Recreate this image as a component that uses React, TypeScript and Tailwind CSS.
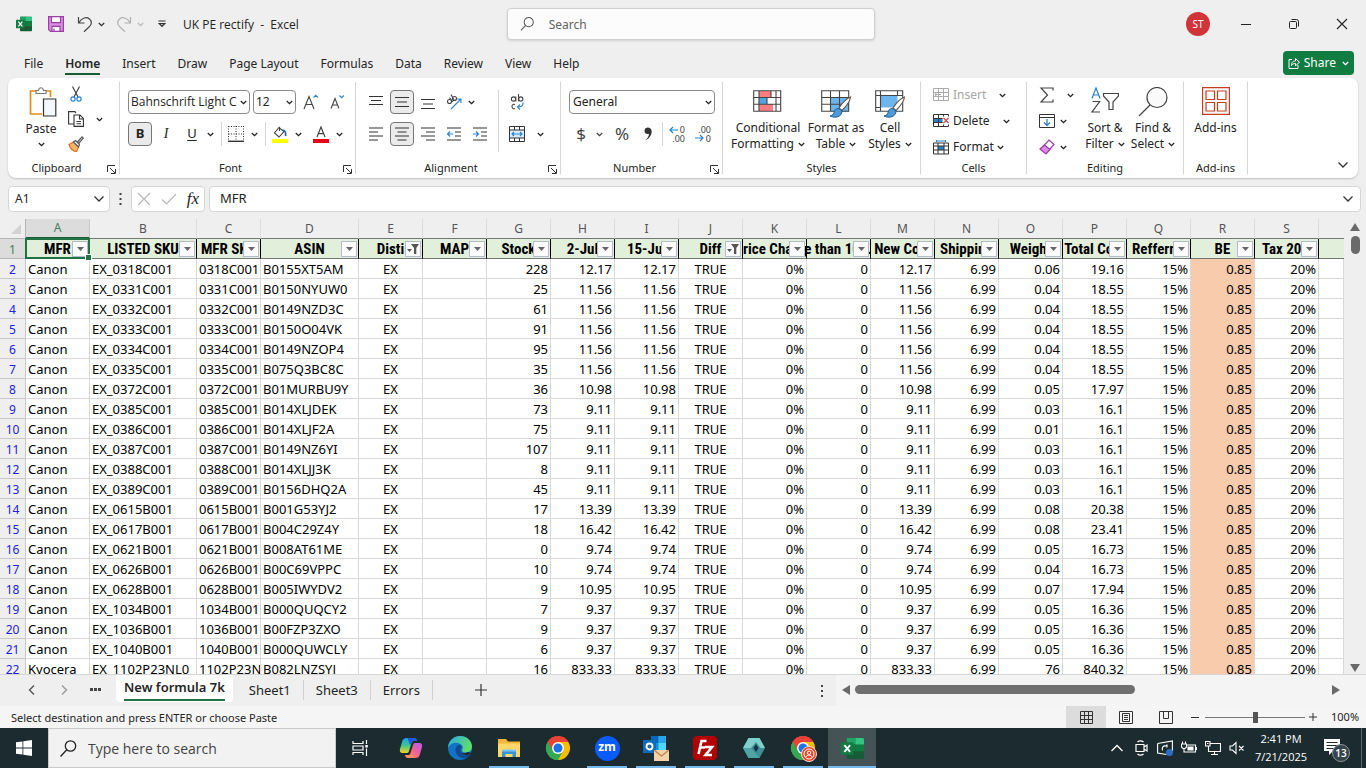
import type { ReactNode } from "react";

type Row = [string, string, string, string, string, string, string, string];

// brand, listed sku, asin, stock, price, weight, total, mfr sku
const rows: Row[] = [
  ["Canon", "EX_0318C001", "B0155XT5AM", "228", "12.17", "0.06", "19.16", "0318C001"],
  ["Canon", "EX_0331C001", "B0150NYUW0", "25", "11.56", "0.04", "18.55", "0331C001"],
  ["Canon", "EX_0332C001", "B0149NZD3C", "61", "11.56", "0.04", "18.55", "0332C001"],
  ["Canon", "EX_0333C001", "B0150O04VK", "91", "11.56", "0.04", "18.55", "0333C001"],
  ["Canon", "EX_0334C001", "B0149NZOP4", "95", "11.56", "0.04", "18.55", "0334C001"],
  ["Canon", "EX_0335C001", "B075Q3BC8C", "35", "11.56", "0.04", "18.55", "0335C001"],
  ["Canon", "EX_0372C001", "B01MURBU9Y", "36", "10.98", "0.05", "17.97", "0372C001"],
  ["Canon", "EX_0385C001", "B014XLJDEK", "73", "9.11", "0.03", "16.1", "0385C001"],
  ["Canon", "EX_0386C001", "B014XLJF2A", "75", "9.11", "0.01", "16.1", "0386C001"],
  ["Canon", "EX_0387C001", "B0149NZ6YI", "107", "9.11", "0.03", "16.1", "0387C001"],
  ["Canon", "EX_0388C001", "B014XLJJ3K", "8", "9.11", "0.03", "16.1", "0388C001"],
  ["Canon", "EX_0389C001", "B0156DHQ2A", "45", "9.11", "0.03", "16.1", "0389C001"],
  ["Canon", "EX_0615B001", "B001G53YJ2", "17", "13.39", "0.08", "20.38", "0615B001"],
  ["Canon", "EX_0617B001", "B004C29Z4Y", "18", "16.42", "0.08", "23.41", "0617B001"],
  ["Canon", "EX_0621B001", "B008AT61ME", "0", "9.74", "0.05", "16.73", "0621B001"],
  ["Canon", "EX_0626B001", "B00C69VPPC", "10", "9.74", "0.04", "16.73", "0626B001"],
  ["Canon", "EX_0628B001", "B005IWYDV2", "9", "10.95", "0.07", "17.94", "0628B001"],
  ["Canon", "EX_1034B001", "B000QUQCY2", "7", "9.37", "0.05", "16.36", "1034B001"],
  ["Canon", "EX_1036B001", "B00FZP3ZXO", "9", "9.37", "0.05", "16.36", "1036B001"],
  ["Canon", "EX_1040B001", "B000QUWCLY", "6", "9.37", "0.05", "16.36", "1040B001"],
  ["Kyocera", "EX_1102P23NL0", "B082LNZSYJ", "16", "833.33", "76", "840.32", "1102P23NL0"],
];

const headers = [
  "MFR", "LISTED SKU", "MFR SKU", "ASIN", "Disti", "MAP", "Stock", "2-Jul", "15-Jul", "Diff",
  "Price Change", "More than 100.00%", "New Cost", "Shipping", "Weight", "Total Cost", "Refferral", "BE", "Tax 20%",
];
const filtered = ["Disti", "Diff"];
const letters = "ABCDEFGHIJKLMNOPQRS".split("");

function Chev({ className = "" }: { className?: string }) {
  return (
    <svg className={`h-[5px] w-[7px] shrink-0 ${className}`} viewBox="0 0 7 5" fill="none" stroke="currentColor" strokeWidth="1.3" aria-hidden="true">
      <path d="M.8 1 3.5 3.7 6.2 1" />
    </svg>
  );
}

function BigChev() {
  return (
    <svg className="h-2 w-3 shrink-0" viewBox="0 0 12 8" fill="none" stroke="#333" strokeWidth="1.3" aria-hidden="true">
      <path d="M1.5 1.5 6 6l4.5-4.5" />
    </svg>
  );
}

function Tool({ label, children, className = "w-6", on = false }: { label: string; children: ReactNode; className?: string; on?: boolean }) {
  return (
    <button
      type="button"
      aria-label={label}
      className={`flex h-6 shrink-0 items-center justify-center rounded ${on ? "border border-[#777] bg-[#ebebeb]" : ""} ${className}`}
    >
      {children}
    </button>
  );
}

function Group({ name, className, launcher = false, children }: { name: string; className: string; launcher?: boolean; children: ReactNode }) {
  return (
    <section aria-label={name} className={`flex shrink-0 py-1 ${className}`}>
      <div className="flex min-w-0 flex-1 flex-col">
        <div className="h-20">{children}</div>
        <div className={`relative flex h-3 items-center justify-center text-[11px] leading-3 ${launcher ? "pr-3.5" : ""}`}>
          {name}
          {launcher && (
            <button type="button" aria-label={`${name} settings`} className="absolute right-[3px] top-[3px]">
              <svg className="h-[9px] w-[9px]" viewBox="0 0 9 9" fill="none" stroke="#333" strokeWidth="1">
                <path d="M.5 7V.5H8M3 3l5 5M8.500 4v4.500H4" />
              </svg>
            </button>
          )}
        </div>
      </div>
      <div className="w-px bg-[#d6d6d6]" />
    </section>
  );
}

function Lines({ d }: { d: string }) {
  return (
    <svg className="h-4 w-4" viewBox="0 0 16 16" fill="none" stroke="#333" strokeWidth="1.1" aria-hidden="true">
      <path d={d} />
    </svg>
  );
}

function ExcelLogo({ className }: { className: string }) {
  return (
    <svg className={className} viewBox="0 0 24 24" aria-hidden="true">
      <rect x="6" y="1" width="18" height="22" rx="1.500" fill="#185c37" />
      <path d="M6 1h9v7H6z" fill="#21a366" />
      <path d="M15 1h7.500A1.500 1.500 0 0 1 24 2.500V8h-9z" fill="#33c481" />
      <path d="M15 8h9v7h-9z" fill="#107c41" />
      <path d="M6 8h9v7H6z" fill="#107c41" />
      <rect x="0" y="5.500" width="13" height="13" rx="1" fill="#107c41" />
      <path d="m3.500 8.500 6 7M9.500 8.500l-6 7" stroke="#fff" strokeWidth="1.900" />
    </svg>
  );
}

function ChromeLogo({ badge = false }: { badge?: boolean }) {
  return (
    <svg className="h-6 w-6 overflow-visible" viewBox="0 0 24 24" aria-hidden="true">
      <path d="M12 12 1.600 6A12 12 0 0 1 22.400 6z" fill="#ea4335" />
      <path d="M12 12 22.400 6A12 12 0 0 1 12 24z" fill="#fbbc04" />
      <path d="M12 12v12A12 12 0 0 1 1.600 6z" fill="#34a853" />
      <path d="M12 6h10.400L17.200 15z" fill="#fbbc04" />
      <path d="M12 6h10.400A12 12 0 0 0 1.600 6l5.200 9z" fill="#ea4335" />
      <path d="m6.800 15-5.200-9A12 12 0 0 0 12 24l5.200-9z" fill="#34a853" />
      <circle cx="12" cy="12" r="6" fill="#fff" />
      <circle cx="12" cy="12" r="4.500" fill="#1a73e8" />
      {badge && (
        <g>
          <circle cx="18" cy="18" r="7.500" fill="#e8472b" stroke="#f6d9cf" strokeWidth="1" />
          <circle cx="18" cy="18" r="5" fill="none" stroke="#fff" strokeWidth="1" />
          <circle cx="18" cy="16.800" r="1.700" fill="none" stroke="#fff" strokeWidth="1" />
          <path d="M15 21c1-2.500 5-2.500 6 0" fill="none" stroke="#fff" strokeWidth="1" />
        </g>
      )}
    </svg>
  );
}

function TitleBar() {
  return (
    <header className="flex h-12 shrink-0 items-center pl-4">
      <div className="flex flex-1 items-center">
        <ExcelLogo className="h-4 w-4" />
        <button type="button" aria-label="Save" className="ml-4">
          <svg className="h-4 w-4" viewBox="0 0 16 16" fill="none" stroke="#9b3fa5" strokeWidth="1.200">
            <path d="M.6.600h14.800v14.800H2.500L.6 13.500z" fill="#d98ee0" />
            <path d="M3.500.600h9v6h-9z" fill="#fff" />
            <path d="M4 15.400v-5h8v5z" fill="#fff" />
            <path d="M6 12.500v3" />
          </svg>
        </button>
        <button type="button" aria-label="Undo" className="ml-[13px] flex items-center gap-[5px] text-[#333]">
          <svg className="h-[17px] w-4" viewBox="0 0 16 17" fill="none" stroke="#444" strokeWidth="1.200">
            <path d="M1.500 1v6h6M1.800 6.800C5 1.500 9.500.500 12.500 3c3 2.700 2 6-.5 8L7 15.800" />
          </svg>
          <Chev />
        </button>
        <button type="button" aria-label="Redo" className="ml-[11px] flex items-center gap-[5px] text-[#bbb]">
          <svg className="h-[17px] w-4" viewBox="0 0 16 17" fill="none" stroke="#b0b0b0" strokeWidth="1.200">
            <path d="M14.500 1v6h-6M14.200 6.800C11 1.500 6.500.500 3.500 3c-3 2.700-2 6 .5 8L9 15.800" />
          </svg>
          <Chev />
        </button>
        <button type="button" aria-label="Customize toolbar" className="ml-[14px]">
          <svg className="h-2 w-2" viewBox="0 0 8 8" fill="none" stroke="#333" strokeWidth="1.200">
            <path d="M.5 1h7M1.200 3.700 4 6.500l2.800-2.800z" />
          </svg>
        </button>
        <h1 className="ml-[17px] whitespace-pre pt-0.5 font-['Open_Sans','Noto_Sans',sans-serif] text-xs">UK PE rectify  -  Excel</h1>
      </div>
      <label className="flex h-8 w-[368px] shrink-0 items-center rounded border border-[#cfcfcf] bg-[#fcfcfc] pl-3 shadow-sm">
        <svg className="h-4 w-4" viewBox="0 0 16 16" fill="none" stroke="#555" strokeWidth="1.100" aria-hidden="true">
          <circle cx="9.500" cy="6" r="5" />
          <path d="m6 9.700-5 5.300" />
        </svg>
        <input aria-label="Search" placeholder="Search" className="ml-3.5 w-full bg-transparent pt-0.5 text-[12px] outline-none placeholder:text-[#616161]" />
      </label>
      <div className="flex flex-1 items-center justify-end">
        <button type="button" aria-label="Account" className="mr-3 h-6 w-6 rounded-full bg-[#d13438] text-[10px] text-white">ST</button>
        <button type="button" aria-label="Minimize" className="flex h-8 w-12 items-center justify-center">
          <span className="h-px w-2.5 bg-[#222]" />
        </button>
        <button type="button" aria-label="Restore" className="flex h-8 w-12 items-center justify-center">
          <svg className="h-2.5 w-2.5" viewBox="0 0 10 10" fill="none" stroke="#222" strokeWidth="1">
            <rect x=".5" y="2.500" width="7" height="7" rx="1" />
            <path d="M2.500.500h5a2 2 0 0 1 2 2v5" />
          </svg>
        </button>
        <button type="button" aria-label="Close" className="flex h-8 w-12 items-center justify-center">
          <svg className="h-3 w-3" viewBox="0 0 12 12" stroke="#222" strokeWidth="1.100">
            <path d="m1 1 10 10M11 1 1 11" />
          </svg>
        </button>
      </div>
    </header>
  );
}

const menu = ["File", "Home", "Insert", "Draw", "Page Layout", "Formulas", "Data", "Review", "View", "Help"];

function MenuBar() {
  return (
    <nav className="flex h-[30px] shrink-0 items-start justify-between pl-6 pr-3">
      <div className="flex gap-[22px] text-[12px] leading-[31px]">
        {menu.map((m) => (
          <a key={m} href="#" className={m === "Home" ? "relative font-semibold" : ""}>
            {m}
            {m === "Home" && <span className="absolute bottom-[4px] left-0 h-0.5 w-full bg-[#185c37]" />}
          </a>
        ))}
      </div>
      <button type="button" className="mt-[3px] flex h-6 items-center gap-1 rounded bg-[#107c41] px-[5px] text-[12px] text-white">
        <svg className="h-3 w-3" viewBox="0 0 12 12" fill="none" stroke="#fff" strokeWidth="1" aria-hidden="true">
          <path d="M4 2.500H1v9h9V8M3.500 8.500C3.500 5 5 4 7.500 4V1.500l4 3.700-4 3.600V6.500C5.500 6.500 4.500 7 3.500 8.500z" />
        </svg>
        Share
        <Chev className="ml-0.5" />
      </button>
    </nav>
  );
}

function TableIcon({ kind }: { kind: "cond" | "table" | "cell" }) {
  return (
    <svg className="h-7 w-[31px]" viewBox="0 0 31 28" fill="none" aria-hidden="true">
      <path d="M.7.700h27v20.600H.7z" fill="#fff" />
      {kind === "cond" && (
        <g>
          <path d="M6 1h12v6H6zM6 14h14v7H6z" fill="#ff7c80" />
          <path d="M6 7.500h8V14H6z" fill="#4ea6e6" />
          <path d="M.7.700h27v20.600H.7zM.7 7.500h27M.7 14.300h27M6 .700v20.600M23 .700v20.600M18 .700v6.800M14 7.500v6.800" stroke="#444" strokeWidth="1.100" />
        </g>
      )}
      {kind === "table" && (
        <g>
          <path d="M9.500 7.500H28v14H9.500z" fill="#6cb5ee" />
          <path d="M.7.700h27v20.600H.7zM.7 7.500h27M.7 14.300h27M9.500 .700v20.600M18.500 .700v20.600" stroke="#444" strokeWidth="1.100" />
        </g>
      )}
      {kind === "cell" && (
        <g>
          <path d="M5.500 5.500h17v12h-17z" fill="#6cb5ee" />
          <path d="M.7.700h27v20.600H.7zM5.500.700v20.600M.7 5.500h27M.7 17.500H6M22.500.700v5" stroke="#444" strokeWidth="1.100" />
        </g>
      )}
      {kind !== "cond" && (
        <g>
          <path d="M29.500 7c-4 1.500-9 7-11.500 11l3 2.500c3.500-3.500 8-9 8.500-13.500z" fill="#fff" stroke="#6b5344" strokeWidth="1.100" />
          <path d="M17.500 18.500c-3 0-4 1.500-4.500 4-.5 2-2 3-4 3.500 5 2.500 12 1 12-5z" fill="#4e9ad6" stroke="#1d5f97" strokeWidth="1" />
        </g>
      )}
    </svg>
  );
}

function BigButton({ icon, lines, drop = true, className, iconGap = "pt-2" }: { icon: ReactNode; lines: string[]; drop?: boolean; className: string; iconGap?: string }) {
  return (
    <button type="button" className={`flex flex-col items-center text-xs leading-4 ${className}`}>
      <span className={`flex h-[38px] items-start ${iconGap}`}>{icon}</span>
      {lines.map((l, i) => (
        <span key={l} className="flex items-center gap-1 whitespace-nowrap">
          {l}
          {drop && i === lines.length - 1 && <Chev />}
        </span>
      ))}
    </button>
  );
}

function CellAction({ label, icon, muted = false, gap }: { label: string; icon: ReactNode; muted?: boolean; gap: string }) {
  return (
    <button type="button" className={`flex h-[26px] items-center text-[12px] ${gap}`}>
      <svg className="mr-[3px] h-4 w-4" viewBox="0 0 16 16" fill="none" stroke={muted ? "#aaa" : "#333"} strokeWidth="1" aria-hidden="true">
        {icon}
      </svg>
      <span className={muted ? "text-[#a6a6a6]" : ""}>{label}</span>
      <Chev />
    </button>
  );
}

function Ribbon() {
  return (
    <div className="mx-2 flex h-[100px] shrink-0 rounded-lg bg-white shadow-[0_1px_2px_rgba(0,0,0,0.2)]">
      <Group name="Clipboard" className="w-[112px]" launcher>
        <div className="flex pl-3">
          <button type="button" className="flex w-[42px] flex-col items-center pt-[5px] text-xs leading-4">
            <svg className="ml-1 h-[30px] w-7" viewBox="0 0 28 30" fill="none" aria-hidden="true">
              <path d="M9 4H1.500v23H13M17 4h4.500v6" stroke="#e88a1a" strokeWidth="1.700" />
              <path d="M7 6.500V3.500h2.500C10 1.300 11 .700 12 .700s2 .600 2.500 2.800H17v3z" fill="#fff" stroke="#777" strokeWidth="1.100" />
              <path d="M14.500 12h12.300v17H14.500z" fill="#f4f8fc" stroke="#333" strokeWidth="1.200" />
            </svg>
            <span className="mt-1">Paste</span>
            <Chev className="mt-[5px]" />
          </button>
          <div className="ml-1 grid">
            <Tool label="Cut" className="w-5">
              <svg className="h-4 w-4" viewBox="0 0 16 16" fill="none" stroke="#444" strokeWidth="1.200">
                <path d="M4.500.500 10 11M11.500.500 6 11" />
                <circle cx="5" cy="13" r="2.100" stroke="#2b83cf" />
                <circle cx="11" cy="13" r="2.100" stroke="#2b83cf" />
              </svg>
            </Tool>
            <div className="flex h-[26px] items-center">
              <Tool label="Copy" className="w-5">
                <svg className="h-4 w-4" viewBox="0 0 16 16" fill="none" stroke="#333" strokeWidth="1.100">
                  <path d="M6 13H.600V.600H7L8 2M6 4h6l3.400 3.400v8H6zM11.500 4v4h4M8.500 10.500h4.500M8.500 12.800h4.500" />
                </svg>
              </Tool>
              <Chev className="ml-2.5" />
            </div>
            <Tool label="Format Painter" className="w-5">
              <svg className="h-4 w-4" viewBox="0 0 16 16" fill="none" strokeWidth="1.200">
                <path d="M1 8.500 5.500 6l5 5-2 4.500c-3 0-6-2.500-7.500-7z" fill="#f7b36b" stroke="#e0701a" />
                <path d="m5.500 6 2-1.500 4 4-1 2.500zM9.500 6 14 .900l1.300 1.300L11 7" fill="#fff" stroke="#555" />
              </svg>
            </Tool>
          </div>
        </div>
      </Group>

      <Group name="Font" className="w-[236px]" launcher>
        <div className="pl-2 pt-2">
          <div className="flex h-6 items-center">
            <div className="relative">
              <select aria-label="Font name" className="block h-6 w-[122px] appearance-none overflow-hidden rounded border border-[#8a8a8a] bg-white pl-0.5 pr-3 font-['Open_Sans','Noto_Sans',sans-serif] text-[12px] outline-none">
                <option>Bahnschrift Light Condensed</option>
              </select>
              <Chev className="pointer-events-none absolute right-[3px] top-[10px]" />
            </div>
            <div className="relative ml-[3px]">
              <select aria-label="Font size" className="block h-6 w-[43px] appearance-none rounded border border-[#8a8a8a] bg-white pl-0.5 text-[12px] outline-none">
                <option>12</option>
              </select>
              <Chev className="pointer-events-none absolute right-[3px] top-[10px]" />
            </div>
            <Tool label="Grow font" className="ml-0.5 w-[26px]">
              <svg className="h-4 w-4" viewBox="0 0 16 16" fill="none" strokeWidth="1.100">
                <path d="m1 15 5-12.500L11 15M3 10.500h6" stroke="#444" />
                <path d="m10.500 3.500 2.200-2.200 2.200 2.200" stroke="#2b83cf" />
              </svg>
            </Tool>
            <Tool label="Shrink font" className="w-[26px]">
              <svg className="h-4 w-4" viewBox="0 0 16 16" fill="none" strokeWidth="1.100">
                <path d="m2 14.500 4-10 4 10M3.500 11h5" stroke="#444" />
                <path d="m10.500 1.500 2.200 2.200 2.200-2.200" stroke="#2b83cf" />
              </svg>
            </Tool>
          </div>
          <div className="mt-2 flex h-6 items-center">
            <Tool label="Bold" on><span className="text-[13px] font-bold">B</span></Tool>
            <Tool label="Italic" className="ml-0.5 w-6"><span className="font-['Liberation_Serif',serif] text-sm italic">I</span></Tool>
            <Tool label="Underline" className="ml-0.5 w-6"><span className="text-[13px] underline underline-offset-2">U</span></Tool>
            <Chev className="ml-[3px]" />
            <span className="ml-[7px] h-6 w-px bg-[#d6d6d6]" />
            <Tool label="Borders" className="ml-0.5 w-6">
              <svg className="h-4 w-4" viewBox="0 0 16 16" fill="none" stroke="#333">
                <path d="M.5.500h15M.5 8h15M.5 0v15M8 0v15M15.500 0v15" strokeDasharray="1 1.500" />
                <path d="M0 15.300h16" strokeWidth="1.400" />
              </svg>
            </Tool>
            <Chev className="ml-[3px]" />
            <span className="ml-[7px] h-6 w-px bg-[#d6d6d6]" />
            <Tool label="Fill color" className="ml-0.5 w-6">
              <svg className="h-[17px] w-4" viewBox="0 0 16 17" fill="none">
                <path d="M7 1.500 2.500 7l4.500 4L12 5.500zM7.500 5V.700" stroke="#444" strokeWidth="1.100" />
                <path d="M10.500 4c3 .500 3.500 3 3 6" stroke="#2166a8" strokeWidth="1.700" />
                <path d="M0 13h16v4H0z" fill="#ffff00" />
              </svg>
            </Tool>
            <Chev className="ml-[3px]" />
            <Tool label="Font color" className="ml-[7px] w-6">
              <svg className="h-[17px] w-4" viewBox="0 0 16 17" fill="none">
                <path d="M4 11 8 1l4 10M5.500 7.700h5" stroke="#444" strokeWidth="1.200" />
                <path d="M0 13h16v4H0z" fill="#e60012" />
              </svg>
            </Tool>
            <Chev className="ml-[3px]" />
          </div>
        </div>
      </Group>

      <Group name="Alignment" className="w-[205px]" launcher>
        <div className="flex items-start pl-2 pt-2">
          <div className="grid gap-y-2">
            <div className="flex items-center gap-0.5">
              <Tool label="Top align"><Lines d="M1 2.500h14M3 6.500h10M1 10.500h14" /></Tool>
              <Tool label="Middle align" on><Lines d="M1 3.500h14M3 8h10M1 12.500h14" /></Tool>
              <Tool label="Bottom align"><Lines d="M1 5.500h14M3 10h10M1 14.500h14" /></Tool>
              <Tool label="Orientation">
                <svg className="h-4 w-4" viewBox="0 0 16 16" fill="none" strokeWidth="1.100">
                  <path d="M5 15 15 5M11 5h4v4" stroke="#2b83cf" />
                  <g stroke="#444">
                    <circle cx="3.500" cy="7.500" r="2" />
                    <path d="M3.500 3.700 7 8" />
                    <circle cx="8.500" cy="4.500" r="2" />
                    <path d="M5 .500 8 6" />
                  </g>
                </svg>
              </Tool>
              <Chev />
            </div>
            <div className="flex items-center gap-0.5">
              <Tool label="Align left"><Lines d="M1 2h14M1 6h9M1 10h14M1 14h9" /></Tool>
              <Tool label="Center" on><Lines d="M1 2h14M3.500 6h9M1 10h14M3.500 14h9" /></Tool>
              <Tool label="Align right"><Lines d="M1 2h14M6 6h9M1 10h14M6 14h9" /></Tool>
              <Tool label="Decrease indent">
                <svg className="h-4 w-4" viewBox="0 0 16 16" fill="none" strokeWidth="1.100">
                  <path d="M1 2h14M9 6h6M9 10h6M1 14h14" stroke="#333" />
                  <path d="M7 8H1.500M4 5.500 1.500 8 4 10.500" stroke="#2b83cf" />
                </svg>
              </Tool>
              <Tool label="Increase indent">
                <svg className="h-4 w-4" viewBox="0 0 16 16" fill="none" strokeWidth="1.100">
                  <path d="M1 2h14M9 6h6M9 10h6M1 14h14" stroke="#333" />
                  <path d="M1 8h5.500M4 5.500 6.500 8 4 10.500" stroke="#2b83cf" />
                </svg>
              </Tool>
            </div>
          </div>
          <span className="ml-1.5 h-[62px] w-px bg-[#d6d6d6]" />
          <div className="ml-1.5 grid gap-y-2">
            <Tool label="Wrap text">
              <svg className="h-4 w-4" viewBox="0 0 16 16" fill="none" strokeWidth="1.100">
                <g stroke="#444">
                  <circle cx="4.500" cy="5" r="2.100" />
                  <path d="M6.800 2.500v5M9.500 0v7.300" />
                  <circle cx="11.800" cy="5" r="2.100" />
                  <path d="M6 10.500c-4-1.500-4 5.500 0 4" />
                </g>
                <path d="M14 8.500v1c0 3-2 3.500-5.500 3.500M11 10.500 8.500 13l2.500 2.500" stroke="#2b83cf" />
              </svg>
            </Tool>
            <div className="flex items-center">
              <Tool label="Merge and center">
                <svg className="h-4 w-4" viewBox="0 0 16 16" fill="none">
                  <path d="M.5 4h15v8H.5z" fill="#d8ecfb" />
                  <path d="M.5.500h15v15H.5zM.5 4h15M.5 12h15M5.500.500V4M10.500.500V4M5.500 12v3.500M10.500 12v3.500" stroke="#333" />
                  <path d="M3 8h10M5 6 3 8l2 2M11 6l2 2-2 2" stroke="#2b83cf" strokeWidth="1.200" />
                </svg>
              </Tool>
              <Chev className="ml-2" />
            </div>
          </div>
        </div>
      </Group>

      <Group name="Number" className="w-[162px]" launcher>
        <div className="pl-2 pt-2">
          <div className="relative w-[146px]">
            <select aria-label="Number format" className="block h-6 w-full appearance-none rounded border border-[#8a8a8a] bg-white pl-[3px] text-[12px] outline-none">
              <option>General</option>
            </select>
            <Chev className="pointer-events-none absolute right-[3px] top-[10px]" />
          </div>
          <div className="mt-2 flex items-center text-[#444]">
            <Tool label="Currency"><span className="text-[17px]">$</span></Tool>
            <Chev className="ml-[3px]" />
            <Tool label="Percent" className="ml-[7px] w-6"><span className="text-[17px]">%</span></Tool>
            <Tool label="Comma" className="ml-0.5 w-6">
              <svg className="h-3.5 w-2" viewBox="0 0 8 14" fill="#333"><path d="M3.500.500A3.500 3.500 0 0 0 .5 4c0 2 1.500 3 3 3 .7 0 1 0 1.500-.300C5 9 3.500 11.500 1 13.500 5 12 7.700 8 7.700 4.500 7.700 2 6 .500 3.500.500z" /></svg>
            </Tool>
            <span className="ml-0.5 h-6 w-px bg-[#d6d6d6]" />
            <Tool label="Increase decimal" className="ml-0.5 w-6">
              <span className="relative flex w-4 flex-col items-end text-[9px] leading-[9px]">
                <svg className="absolute left-0 top-px h-2 w-2.5" viewBox="0 0 10 8" fill="none" stroke="#2b83cf" strokeWidth="1.200"><path d="M9 4H1M4 1 1 4l3 3" /></svg>
                <span>0</span><span>.00</span>
              </span>
            </Tool>
            <Tool label="Decrease decimal" className="ml-0.5 w-6">
              <span className="relative flex w-4 flex-col items-end text-[9px] leading-[9px]">
                <svg className="absolute bottom-px left-0 h-2 w-2.5" viewBox="0 0 10 8" fill="none" stroke="#2b83cf" strokeWidth="1.200"><path d="M0 4h8M5 1l3 3-3 3" /></svg>
                <span>.00</span><span>0</span>
              </span>
            </Tool>
          </div>
        </div>
      </Group>

      <Group name="Styles" className="w-[198px]">
        <div className="flex pl-[7px]">
          <BigButton className="w-[76px]" icon={<TableIcon kind="cond" />} lines={["Conditional", "Formatting"]} />
          <BigButton className="w-[60px]" icon={<TableIcon kind="table" />} lines={["Format as", "Table"]} />
          <BigButton className="w-12" icon={<TableIcon kind="cell" />} lines={["Cell", "Styles"]} />
        </div>
      </Group>

      <Group name="Cells" className="w-[106px]">
        <div className="flex flex-col items-start pl-3">
          <CellAction label="Insert" muted gap="gap-px [&>svg:last-child]:ml-3" icon={<path d="M.5 1.500h15v12H.5zM.5 5.500h15M.5 9.500h15M5.500 1.500v12M10.500 1.500v12M8 7.500H2M4 5 2 7.500 4 10" />} />
          <CellAction
            label="Delete"
            gap="gap-px [&>svg:last-child]:ml-3"
            icon={<><path d="M.5 5.500h9v4h-9z" fill="#2b83cf" stroke="none" /><path d="M.5 1.500h15v2M.5 1.500v12h15v-2M.5 5.500h9M.5 9.500h9M5.500 1.500v12M10.500 1.500v2M10.500 11.500v2" /><path d="m10.500 5 5 5M15.500 5l-5 5" stroke="#e0454b" strokeWidth="1.300" /></>}
          />
          <CellAction
            label="Format"
            gap="gap-px [&>svg:last-child]:ml-0.5"
            icon={<><path d="M5 7h6v4H5z" fill="#2b83cf" stroke="none" /><path d="M.5 4v11h15V4zM.5 7h15M.5 11h15M5 4v11M11 4v11" /><path d="M3.500 1v2M12.500 1v2M3.500 2h9" stroke="#2b83cf" /></>}
          />
        </div>
      </Group>

      <Group name="Editing" className="w-[157px]">
        <div className="flex pl-[7px]">
          <div className="grid">
            <div className="flex h-[26px] items-center">
              <Tool label="AutoSum" className="w-[26px]">
                <svg className="h-4 w-4" viewBox="0 0 16 16" fill="none" stroke="#444" strokeWidth="1.200"><path d="M14 3.500V1H2l6.500 7L2 15h12v-2.500" /></svg>
              </Tool>
              <Chev className="ml-[7px]" />
            </div>
            <div className="flex h-[26px] items-center">
              <Tool label="Fill" className="w-[26px]">
                <svg className="h-4 w-4" viewBox="0 0 16 16" fill="none" stroke="#333"><path d="M.5 1.500h15v13H.5zM.5 4.500h15" /><path d="M8 6v6.500M5 9.500l3 3 3-3" stroke="#2b83cf" strokeWidth="1.300" /></svg>
              </Tool>
              <Chev />
            </div>
            <div className="flex h-[26px] items-center">
              <Tool label="Clear" className="w-[26px]">
                <svg className="h-4 w-4" viewBox="0 0 16 16" fill="none" stroke="#9b3fa5" strokeWidth="1.200"><path d="m10 1 5 4.500-8 9-5.500-4.500z" fill="#fff" /><path d="M5.500 6 11 10.500l-4 4.500-6-5z" fill="#d98ee0" /></svg>
              </Tool>
              <Chev />
            </div>
          </div>
          <BigButton
            className="ml-[7px] w-12"
            lines={["Sort &", "Filter"]}
            icon={
              <svg className="h-7 w-7" viewBox="0 0 28 28" fill="none" strokeWidth="1.200" aria-hidden="true">
                <path d="M1 12.500 5 2l4 10.500M2.500 9h5" stroke="#2b83cf" />
                <path d="M1.500 15.500h7.200L1 26h8" stroke="#444" />
                <path d="M12.500 7.500h15v2.500l-5.500 6v7.500h-4V16l-5.500-6z" stroke="#444" />
              </svg>
            }
            iconGap="pt-1"
          />
          <BigButton
            className="w-12"
            lines={["Find &", "Select"]}
            iconGap="pt-[5px]"
            icon={
              <svg className="h-[30px] w-[30px]" viewBox="0 0 30 30" fill="none" stroke="#444" strokeWidth="1.200" aria-hidden="true">
                <circle cx="19" cy="10.500" r="10" fill="#fafafa" />
                <path d="M12 18 1 29" />
              </svg>
            }
          />
        </div>
      </Group>

      <Group name="Add-ins" className="w-16">
        <BigButton
          className="w-full"
          drop={false}
          lines={["Add-ins"]}
          iconGap="pt-[5px]"
          icon={
            <svg className="h-7 w-7" viewBox="0 0 28 28" fill="none" stroke="#c43e1c" strokeWidth="1.200" aria-hidden="true">
              <path d="M.6.600h26.800v26.800H.6zM4 4h8.500v8.500H4zM15.500 4H24v8.500h-8.500zM4 15.500h8.500V24H4zM15.500 15.500H24V24h-8.500z" />
            </svg>
          }
        />
      </Group>
      <div className="flex flex-1 items-end justify-end p-[9px]">
        <button type="button" aria-label="Collapse ribbon"><BigChev /></button>
      </div>
    </div>
  );
}

function FormulaBar() {
  return (
    <div className="flex h-[41px] shrink-0 items-center pl-2 pr-[5px] pt-px">
      <div className="flex h-[26px] w-[102px] items-center justify-between rounded border border-[#d6d6d6] bg-white px-1">
        <input aria-label="Name box" defaultValue="A1" className="w-16 bg-transparent pl-0.5 text-[12px] outline-none" />
        <BigChev />
      </div>
      <svg className="mx-2 h-3 w-[5px]" viewBox="0 0 5 12" fill="#444" aria-hidden="true">
        <path d="M1.500 0h2v2h-2zM1.500 5h2v2h-2zM1.500 10h2v2h-2z" />
      </svg>
      <div className="flex h-[26px] w-[74px] items-center justify-around rounded border border-[#d6d6d6] bg-white">
        <svg className="h-3.5 w-3.5" viewBox="0 0 14 14" stroke="#b8b8b8" strokeWidth="1.200" aria-hidden="true"><path d="m1 1 12 12M13 1 1 13" /></svg>
        <svg className="h-3.5 w-4" viewBox="0 0 16 14" fill="none" stroke="#b8b8b8" strokeWidth="1.200" aria-hidden="true"><path d="m1 7.500 4.500 4.500L15 2" /></svg>
        <button type="button" aria-label="Insert function" className="font-['Liberation_Serif',serif] text-[17px] italic leading-5 text-[#222]">fx</button>
      </div>
      <label className="ml-1 flex h-[26px] flex-1 items-center rounded border border-[#d6d6d6] bg-white pl-2.5 pr-1.5">
        <input aria-label="Formula" defaultValue="MFR" className="flex-1 bg-transparent text-[13px] outline-none" />
        <BigChev />
      </label>
    </div>
  );
}

const cell = "h-5 overflow-hidden whitespace-nowrap border-b border-r border-[#d9d9d9] bg-white p-0 px-[2px] pt-0.5 leading-[17px]";

function Sheet() {
  return (
    <div className="flex min-h-0 flex-1">
      <div className="min-w-0 flex-1 overflow-hidden">
        <table className="w-full table-fixed border-separate border-spacing-0 text-[13px] text-black">
          <colgroup>
            <col className="w-[26px]" />
            <col className="w-16" />
            <col className="w-[107px]" />
            <col className="w-16" />
            <col className="w-[98px]" />
            {letters.slice(4).map((l) => <col key={l} className="w-16" />)}
            <col />
          </colgroup>
          <thead>
            <tr className="text-xs text-[#555]">
              <th className="h-5 border-b border-r border-[#b5b5b5] p-0">
                <svg className="ml-auto mr-1 h-2.5 w-2.5" viewBox="0 0 10 10" fill="#d2d2d2" aria-hidden="true"><path d="M10 0v10H0z" /></svg>
              </th>
              {letters.map((l) => (
                <th key={l} className={l === "A" ? "h-5 border-b-2 border-r border-[#185c37] border-r-[#c8c8c8] bg-[#dcdcdc] p-0 font-normal leading-[18px] text-[#3f7f5f]" : "h-5 border-b border-r border-b-[#777] border-r-[#dcdcdc] p-0 font-normal leading-[19px]"}>{l}</th>
              ))}
              <th className="h-5 border-b border-[#777] p-0" />
            </tr>
            <tr>
              <th className="h-5 border-b border-r border-[#b5b5b5] bg-[#dcdcdc] p-0 pt-0.5 text-[12px] font-normal leading-[17px] text-[#3f7f5f]">1</th>
              {headers.map((h) => (
                <th key={h} className="relative h-5 border-b border-r border-b-[#777] border-r-black bg-[#e2efda] p-0 font-['Roboto_Condensed','Roboto',sans-serif] text-[15px] font-bold leading-[17px]">
                  <div className="flex h-[19px] justify-center overflow-hidden whitespace-nowrap pt-0.5"><span>{h}</span></div>
                  <button type="button" aria-label={`Filter ${h}`} className="absolute right-px top-[2px] flex h-4 w-4 items-center justify-center border border-[#b4bccb] bg-[#fbfbfd]">
                    {filtered.includes(h) ? (
                      <svg className="h-3 w-3" viewBox="0 0 12 12" fill="#555" aria-hidden="true"><path d="M4 1h8L9.300 5v6H7V5zM0 6h5L2.500 9z" /></svg>
                    ) : (
                      <svg className="h-1 w-[7px]" viewBox="0 0 7 4" fill="#666" aria-hidden="true"><path d="M0 0h7L3.500 4z" /></svg>
                    )}
                  </button>
                  {h === "MFR" && (
                    <span className="pointer-events-none absolute -inset-px z-10 border-2 border-[#217346]">
                      <span className="absolute -bottom-[3px] -right-[3px] h-[5px] w-[5px] bg-[#217346] outline outline-white" />
                    </span>
                  )}
                </th>
              ))}
              <th className="h-5 border-b border-[#777] bg-[#e2efda] p-0" />
            </tr>
          </thead>
          <tbody>
            {rows.map(([brand, sku, asin, stock, price, weight, total, mfr], i) => (
              <tr key={sku}>
                <th className="h-5 border-b border-r border-[#c8c8c8] p-0 pt-0.5 text-[12px] font-normal leading-[17px] text-[#2222dd]">{i + 2}</th>
                <td className={cell}>{brand}</td>
                <td className={cell}>{sku}</td>
                <td className={cell}>{mfr}</td>
                <td className={cell}>{asin}</td>
                <td className={`${cell} text-center`}>EX</td>
                <td className={cell} />
                <td className={`${cell} text-right`}>{stock}</td>
                <td className={`${cell} text-right`}>{price}</td>
                <td className={`${cell} text-right`}>{price}</td>
                <td className={`${cell} text-center`}>TRUE</td>
                <td className={`${cell} text-right`}>0%</td>
                <td className={`${cell} text-right`}>0</td>
                <td className={`${cell} text-right`}>{price}</td>
                <td className={`${cell} text-right`}>6.99</td>
                <td className={`${cell} text-right`}>{weight}</td>
                <td className={`${cell} text-right`}>{total}</td>
                <td className={`${cell} text-right`}>15%</td>
                <td className="h-5 border-r border-[#d9d9d9] bg-[#f8cbad] p-0 px-[2px] text-right leading-5">0.85</td>
                <td className={`${cell} text-right`}>20%</td>
                <td className={cell} />
              </tr>
            ))}
          </tbody>
        </table>
      </div>
      <div className="flex w-[22px] shrink-0 flex-col items-center pb-0.5 pt-1">
        <svg className="h-2 w-2.5" viewBox="0 0 10 8" fill="#6a6a6a" aria-hidden="true"><path d="M5 0 10 8H0z" /></svg>
        <span className="mt-[5px] h-[18px] w-[9px] rounded-full bg-[#6a6a6a]" />
        <span className="flex-1" />
        <svg className="h-2 w-2.5" viewBox="0 0 10 8" fill="#6a6a6a" aria-hidden="true"><path d="M5 8 10 0H0z" /></svg>
      </div>
    </div>
  );
}

function SheetTabs() {
  return (
    <div className="flex h-8 shrink-0 border-t border-[#d6d6d6] text-[13px]">
      <div className="flex w-[116px] shrink-0 items-center pb-0.5 pl-7">
        <svg className="h-2.5 w-[7px]" viewBox="0 0 7 10" fill="none" stroke="#555" strokeWidth="1.400" aria-hidden="true"><path d="M6 .500 1.500 5 6 9.500" /></svg>
        <svg className="ml-[26px] h-2.5 w-[7px]" viewBox="0 0 7 10" fill="none" stroke="#999" strokeWidth="1.400" aria-hidden="true"><path d="M1 .500 5.500 5 1 9.500" /></svg>
        <svg className="ml-[22px] h-[3px] w-[11px]" viewBox="0 0 11 3" fill="#444" aria-hidden="true"><path d="M0 0h3v3H0zM4 0h3v3H4zM8 0h3v3H8z" /></svg>
      </div>
      <a href="#" className="flex h-[27px] items-start rounded-b bg-white px-2 text-[13px] font-semibold">
        <span className="border-b-2 border-[#217346] leading-6">New formula 7k</span>
      </a>
      <div className="flex items-center pb-0.5 pl-1">
        {["Sheet1", "Sheet3", "Errors"].map((t) => (
          <a key={t} href="#" className="border-r border-[#cfcfcf] px-3 leading-5">{t}</a>
        ))}
        <button type="button" aria-label="New sheet" className="ml-[42px]">
          <svg className="h-3 w-3" viewBox="0 0 12 12" stroke="#333" strokeWidth="1.200"><path d="M6 0v12M0 6h12" /></svg>
        </button>
      </div>
      <div className="ml-auto flex w-[550px] items-center">
        <svg className="h-3 w-[10px]" viewBox="0 0 10 12" fill="#444" aria-hidden="true"><path d="M5 0h2v2H5zM5 5h2v2H5zM5 10h2v2H5z" /></svg>
        <div className="ml-2.5 flex h-full flex-1 items-center bg-[#f4f4f4] pb-0.5 pl-1.5 pr-[26px]">
          <svg className="h-2.5 w-2" viewBox="0 0 8 10" fill="#6a6a6a" aria-hidden="true"><path d="M8 0v10L0 5z" /></svg>
          <span className="ml-[5px] h-[9px] w-[280px] rounded-full bg-[#6f6f6f]" />
          <svg className="ml-auto h-2.5 w-2" viewBox="0 0 8 10" fill="#6a6a6a" aria-hidden="true"><path d="M0 0v10l8-5z" /></svg>
        </div>
      </div>
    </div>
  );
}

function StatusBar() {
  return (
    <div className="flex h-[22px] shrink-0 items-center justify-between bg-[#f5f5f5] pl-[11px] pr-[7px] text-[11px]">
      <span className="pt-0.5">Select destination and press ENTER or choose Paste</span>
      <div className="flex h-full items-center">
        <button type="button" aria-label="Normal view" className="flex h-full w-10 items-center justify-center bg-[#dcdcdc]">
          <svg className="h-[13px] w-[13px]" viewBox="0 0 13 13" fill="none" stroke="#333"><path d="M.5.500h12v12H.5zM.5 4.500h12M.5 8.500h12M4.500.500v12M8.500.500v12" /></svg>
        </button>
        <button type="button" aria-label="Page layout view" className="flex h-full w-10 items-center justify-center">
          <svg className="h-[13px] w-[14px]" viewBox="0 0 14 13" fill="none" stroke="#333"><path d="M.5.500h13v12H.5zM3.500 2.500h7v8h-7zM5 4.500h4M5 6.500h4M5 8.500h4" /></svg>
        </button>
        <button type="button" aria-label="Page break preview" className="flex h-full w-10 items-center justify-center">
          <svg className="h-[13px] w-[14px]" viewBox="0 0 14 13" fill="none" stroke="#333"><path d="M.5.500h13v12H.5zM4.500.500v7M9.500.500v7H4.500" /></svg>
        </button>
        <button type="button" aria-label="Zoom out" className="ml-[5px] flex h-full w-3.5 items-center"><span className="h-px w-2 bg-[#333]" /></button>
        <input
          type="range"
          aria-label="Zoom"
          defaultValue={50}
          className="h-4 w-[100px] appearance-none bg-[linear-gradient(#777,#777)] bg-[length:100%_1px] bg-center bg-no-repeat [&::-webkit-slider-thumb]:h-[11px] [&::-webkit-slider-thumb]:w-[5px] [&::-webkit-slider-thumb]:appearance-none [&::-webkit-slider-thumb]:bg-[#555]"
        />
        <button type="button" aria-label="Zoom in" className="ml-1 mr-3.5">
          <svg className="h-2 w-2" viewBox="0 0 8 8" stroke="#333"><path d="M4 0v8M0 4h8" /></svg>
        </button>
        <span className="w-7 text-[11px]">100%</span>
      </div>
    </div>
  );
}

function TaskApp({ label, open = false, active = false, children }: { label: string; open?: boolean; active?: boolean; children: ReactNode }) {
  return (
    <button type="button" aria-label={label} className={`relative mr-px flex h-10 w-12 items-center justify-center ${active ? "bg-[#455256]" : ""}`}>
      {children}
      {open && <span className={`absolute bottom-0 h-0.5 bg-[#76b9ed] ${active ? "w-full" : "w-10"}`} />}
    </button>
  );
}

function Taskbar() {
  return (
    <footer className="flex h-10 shrink-0 bg-[#1b2b2f] font-['Open_Sans','Noto_Sans',sans-serif] text-white">
      <button type="button" aria-label="Start" className="flex w-12 items-center justify-center">
        <svg className="h-4 w-4" viewBox="0 0 16 16" fill="#fff"><path d="M0 2.300 6.500 1.400v6.200H0zM7.300 1.300 16 0v7.600H7.300zM0 8.400h6.500v6.200L0 13.700zM7.300 8.400H16V16l-8.700-1.300z" /></svg>
      </button>
      <label className="flex w-72 items-center border border-[#c9c9c9] bg-[#f2f2f2] pl-[11px]">
        <svg className="h-[17px] w-[17px]" viewBox="0 0 17 17" fill="none" stroke="#222" strokeWidth="1.300" aria-hidden="true"><circle cx="10.500" cy="6" r="5.200" /><path d="M6.800 9.700.5 16.500" /></svg>
        <input aria-label="Type here to search" placeholder="Type here to search" className="ml-[11px] w-56 bg-transparent pt-px text-sm text-[#333] outline-none placeholder:text-[#444]" />
      </label>
      <button type="button" aria-label="Task view" className="flex w-[51px] items-center justify-center pr-0.5">
        <svg className="h-4 w-[17px]" viewBox="0 0 17 16" fill="none" stroke="#fff" strokeWidth="1.200"><path d="M1 1v2.500h10V1M1 15v-2.500h10V15M1 6h10v4H1zM14.500 0v4M14.500 8.500V16" /><path d="M13.300 5h2.500v2.500h-2.500z" fill="#fff" stroke="none" /></svg>
      </button>
      <TaskApp label="Copilot">
        <svg className="h-6 w-6" viewBox="0 0 24 24" fill="none">
          <defs>
            <linearGradient id="cpA" x1="0" y1="0" x2="0" y2="1"><stop stopColor="#19a3f5" /><stop offset=".5" stopColor="#3bc78a" /><stop offset="1" stopColor="#f7d21e" /></linearGradient>
            <linearGradient id="cpB" x1="1" y1="0" x2="0" y2="1"><stop stopColor="#b45cf2" /><stop offset=".5" stopColor="#f4628e" /><stop offset="1" stopColor="#ffa14a" /></linearGradient>
          </defs>
          <path d="M8 2h7c2 0 2.500 1 3 3h-3c-1.500 0-2 .500-2.500 2L10 15c-.500 1.500-1 2-3 2H4c-3 0-3.500-2-3-4L3 6c.800-3 2-4 5-4z" fill="url(#cpA)" />
          <path d="M8.500 2H15c2 0 2.500 1 3 3h-3c-1.200 0-2 .500-2.300 1.500L11 9z" fill="#2257d6" />
          <path d="M16 22H9c-2 0-2.500-1-3-3h3c1.500 0 2-.500 2.500-2L14 9c.5-1.500 1-2 3-2h3c3 0 3.500 2 3 4l-2 7c-.8 3-2 4-5 4z" fill="url(#cpB)" />
        </svg>
      </TaskApp>
      <TaskApp label="Edge">
        <svg className="h-6 w-6" viewBox="0 0 24 24">
          <defs>
            <linearGradient id="edA" x1="0" y1="0" x2="1" y2=".4"><stop stopColor="#2aa9e8" /><stop offset="1" stopColor="#5fdc6c" /></linearGradient>
          </defs>
          <circle cx="12" cy="12" r="12" fill="#1273c4" />
          <path d="M0 11.500C.5 4.500 6 0 12 0c7 0 12 5 12 10.500 0 4-3 6-6.500 6-3 0-4-1.500-3.300-2.700.8-1.300.8-2.800-.2-4.300C11 5.500 3 5.500 0 11.500z" fill="url(#edA)" />
          <path d="M9.500 9.500c-4 3-2.500 12 7 13 2.500-.800 4.500-2.300 6-4.500-4 2-9 1-10-3-.3-2 .5-3 1.500-4-1-2-3-2.500-4.500-1.500z" fill="#124a92" />
          <path d="M22.800 17.700c-3.500 2.300-8.800 1.500-10.200-2.200.5 1.800 4 2.500 7 .500 2.300 0 3.500.700 3.200 1.700z" fill="#1b2b2f" />
        </svg>
      </TaskApp>
      <TaskApp label="File Explorer" open>
        <svg className="h-6 w-6" viewBox="0 0 24 24"><path d="M1 3h8l2 2.500h12V21H1z" fill="#f3b63a" /><path d="M1 7.500h22V21H1z" fill="#ffd868" /><path d="M5 21v-6.500h14V21h-3.500v-3h-7v3z" fill="#3a93d8" /><path d="M5 13.500h14v2H5z" fill="#7cc4f5" /></svg>
      </TaskApp>
      <TaskApp label="Chrome"><ChromeLogo /></TaskApp>
      <TaskApp label="Zoom" open>
        <span className="flex h-[25px] w-[25px] items-center justify-center rounded-full bg-[#0b5cff] pb-0.5 text-[12px] font-bold">zm</span>
      </TaskApp>
      <TaskApp label="Outlook" open>
        <svg className="h-[26px] w-[26px]" viewBox="0 0 26 26"><path d="M8 1h15v15H8z" fill="#1490df" /><path d="M8 1h7.500v7H8z" fill="#0a66b8" /><path d="M15.500 1H23v7h-7.500z" fill="#28a8ea" /><path d="M15.500 8H23v7h-7.500z" fill="#50d9ff" /><path d="M0 5h13v13H0z" fill="#0f6cbd" /><circle cx="6.500" cy="11.500" r="3" fill="none" stroke="#fff" strokeWidth="1.900" /><path d="M11 15h15v11H11z" fill="#f2d2a9" /><path d="m11 15 7.500 6 7.500-6" fill="none" stroke="#bd7f42" strokeWidth="1.200" /></svg>
      </TaskApp>
      <TaskApp label="FileZilla" open>
        <span className="flex h-6 w-6 items-center justify-center rounded-sm bg-[#b30000]">
          <svg className="h-5 w-5" viewBox="0 0 20 20" fill="none" stroke="#fff" strokeWidth="2.600" aria-hidden="true"><path d="M11.500 3H6.500L3.500 16M5 9.500h5M10 9h7l-6.500 8H17" /></svg>
        </span>
      </TaskApp>
      <TaskApp label="Hexagon" open>
        <svg className="h-[22px] w-6" viewBox="0 0 24 22"><path d="M6.500 1h11L23 11l-5.500 10h-11L1 11z" fill="#3f8f93" /><path d="M6.500 1h11L23 11h-4.500L14 5l-5 6H1z" fill="#7fcfcb" /><path d="M1 11h8l5 6 3.500 4h-11z" fill="#4fa5a6" /><path d="m14 7 2.500 4-2.500 4-2.500-4z" fill="#14324a" /></svg>
      </TaskApp>
      <TaskApp label="Chrome profile" open><ChromeLogo badge /></TaskApp>
      <TaskApp label="Excel" open active><ExcelLogo className="h-[23px] w-[23px]" /></TaskApp>
      <div className="ml-auto flex items-center">
        <div className="flex items-center gap-2">
          <svg className="h-3 w-4" viewBox="0 0 16 12" fill="none" stroke="#fff" strokeWidth="1.300" aria-hidden="true"><path d="m2.500 9 5.500-5.500L13.500 9" /></svg>
          <svg className="h-4 w-4" viewBox="0 0 16 16" fill="none" stroke="#fff" strokeWidth="1.200" aria-hidden="true"><path d="M3 4.500h8v7H3zM11 7l3-2v6l-3-2M4.500 2c1.500-1.500 4.500-1.500 6 0M4.500 14c1.500 1.500 4.500 1.500 6 0" /></svg>
          <svg className="h-4 w-4" viewBox="0 0 16 16" fill="none" stroke="#fff" strokeWidth="1.100" aria-hidden="true"><path d="M.600 3.500 15.400 1v10M.600 3.500v9.500l9 1.500M5.500 10.500c-1-3 1-5 3-4.500l1.500-1M10 4.500v3" /><circle cx="12.500" cy="12.500" r="3.500" fill="#2b6fc4" stroke="none" /></svg>
          <svg className="h-4 w-4" viewBox="0 0 16 16" fill="none" stroke="#fff" strokeWidth="1.100" aria-hidden="true"><path d="M5 5h9.500v7H5M15.500 7v3M1.500 1.500V4M4.500 1.500V4M.5 4h5v3l-1.500 1.500H2L.5 7zM3 8.500V12h2" /><path d="M7 7h5v3H7z" fill="#fff" /></svg>
          <svg className="h-4 w-4" viewBox="0 0 16 16" fill="none" stroke="#fff" strokeWidth="1.100" aria-hidden="true"><path d="M5 3.500h10.500v8H3.500V6M9.500 11.500V14M6 14.500h7M.5 1.500H5V6H.5zM2 3.500h1.500" /></svg>
          <svg className="h-4 w-4" viewBox="0 0 16 16" fill="none" stroke="#fff" strokeWidth="1.100" aria-hidden="true"><path d="M1 6h2.500L7 2.500v11L3.500 10H1zM10 6l4.500 4.500M14.500 6 10 10.500" /></svg>
        </div>
        <time className="ml-1.5 w-[60px] text-center text-[11px] leading-[18px]">2:41 PM<br />7/21/2025</time>
        <button type="button" aria-label="Notifications" className="relative ml-[13px] mr-[11px] h-6 w-[26px]">
          <svg className="h-5 w-4" viewBox="0 0 16 20" fill="#fff"><path d="M0 1h16v12H9l-4 4v-4H0z" /><path d="M2.500 4.500h11M2.500 7.500h11M2.500 10.500h7" stroke="#1b2b2f" /></svg>
          <span className="absolute -bottom-0.5 right-0 flex h-[18px] w-[18px] items-center justify-center rounded-full border border-[#8c9496] bg-[#35454a] text-[10px] font-semibold">13</span>
        </button>
        <span className="mr-1 h-10 w-px bg-[#56656a]" />
      </div>
    </footer>
  );
}

export default function App() {
  return (
    <div className="flex h-screen flex-col overflow-hidden bg-[#efefef] font-['Noto_Sans','Open_Sans',sans-serif] text-[#242424]">
      <TitleBar />
      <MenuBar />
      <Ribbon />
      <FormulaBar />
      <Sheet />
      <SheetTabs />
      <StatusBar />
      <Taskbar />
    </div>
  );
}
